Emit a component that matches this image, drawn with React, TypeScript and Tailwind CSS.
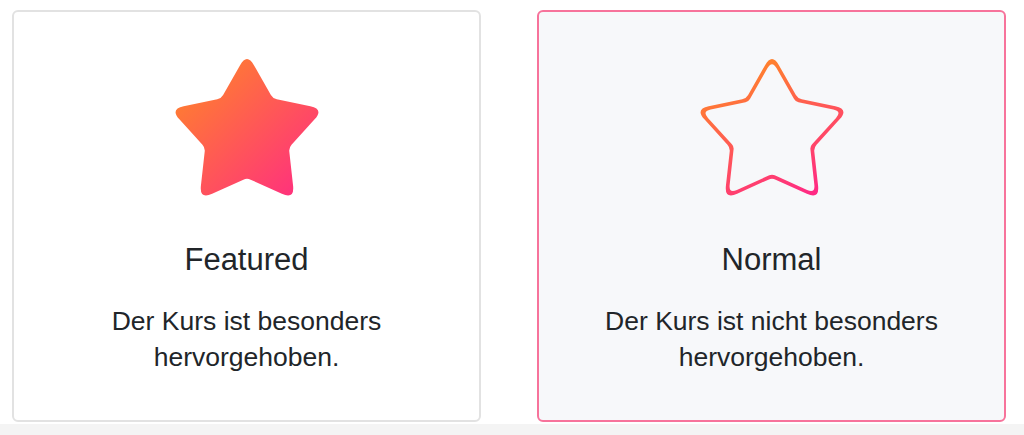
import React from 'react';

// Builds a five-point star with rounded tips and inner corners
function starPath(R: number, r: number, tip: number, notch: number) {
  const pts: [number, number][] = [];
  for (let i = 0; i < 10; i++) {
    const ang = ((-90 + i * 36) * Math.PI) / 180;
    const rad = i % 2 === 0 ? R : r;
    pts.push([Math.cos(ang) * rad, Math.sin(ang) * rad]);
  }
  const toward = (p: [number, number], q: [number, number], c: number) => {
    const dx = q[0] - p[0];
    const dy = q[1] - p[1];
    const len = Math.hypot(dx, dy);
    return [p[0] + (dx / len) * c, p[1] + (dy / len) * c];
  };
  let d = '';
  pts.forEach((p, i) => {
    const prev = pts[(i + 9) % 10];
    const next = pts[(i + 1) % 10];
    const c = i % 2 === 0 ? tip : notch;
    const a = toward(p, prev, c);
    const b = toward(p, next, c);
    d += `${i === 0 ? 'M' : 'L'}${a[0].toFixed(2)},${a[1].toFixed(2)} Q${p[0].toFixed(2)},${p[1].toFixed(2)} ${b[0].toFixed(2)},${b[1].toFixed(2)} `;
  });
  return d + 'Z';
}

const outer = starPath(81, 44, 14, 4);
const inner = starPath(81 * 0.91, 44 * 0.91, 9, 3);

const StarIcon = ({ filled, id }: { filled: boolean; id: string }) => (
  <svg width="170" height="170" viewBox="-85 -85 170 170">
    <defs>
      <linearGradient
        id={id}
        x1={filled ? '0' : '0.25'}
        y1="0"
        x2={filled ? '1' : '0.75'}
        y2="1"
      >
        <stop offset="0%" stopColor="#ff8a24" />
        <stop offset="100%" stopColor="#ff2a84" />
      </linearGradient>
    </defs>
    <path d={outer} fill={`url(#${id})`} />
    {!filled && <path d={inner} fill="#f7f8fa" />}
  </svg>
);

// Option cards for the "featured" setting of a course
const options = [
  {
    id: 'featured',
    title: 'Featured',
    text: ['Der Kurs ist besonders', 'hervorgehoben.'],
    filled: true,
    selected: false,
  },
  {
    id: 'normal',
    title: 'Normal',
    text: ['Der Kurs ist nicht besonders', 'hervorgehoben.'],
    filled: false,
    selected: true,
  },
];

export default function App() {
  return (
    <div
      className="min-h-screen bg-[#f4f4f4] text-[#212529]"
      style={{ fontFamily: '"Liberation Sans", Arial, sans-serif' }}
    >
      <div className="h-[424px] bg-white pt-[10px]">
        <div className="ml-3 grid w-[994px] grid-cols-2 gap-[56px]">
          {options.map((opt) => (
            <div
              key={opt.id}
              className={
                opt.selected
                  ? 'flex h-[412px] flex-col items-center rounded-md border-2 border-[#f7739b] bg-[#f7f8fa] pt-[37px]'
                  : 'flex h-[412px] flex-col items-center rounded-md border-2 border-[#e2e2e2] bg-white pt-[37px]'
              }
            >
              <StarIcon filled={opt.filled} id={`grad-${opt.id}`} />
              <h2 className="mt-[22px] text-[31px] leading-[37px] font-normal">{opt.title}</h2>
              <p className="mt-[25px] text-center text-[26.5px] leading-[36px]">
                {opt.text[0]}
                <br />
                {opt.text[1]}
              </p>
            </div>
          ))}
        </div>
      </div>
    </div>
  );
}
